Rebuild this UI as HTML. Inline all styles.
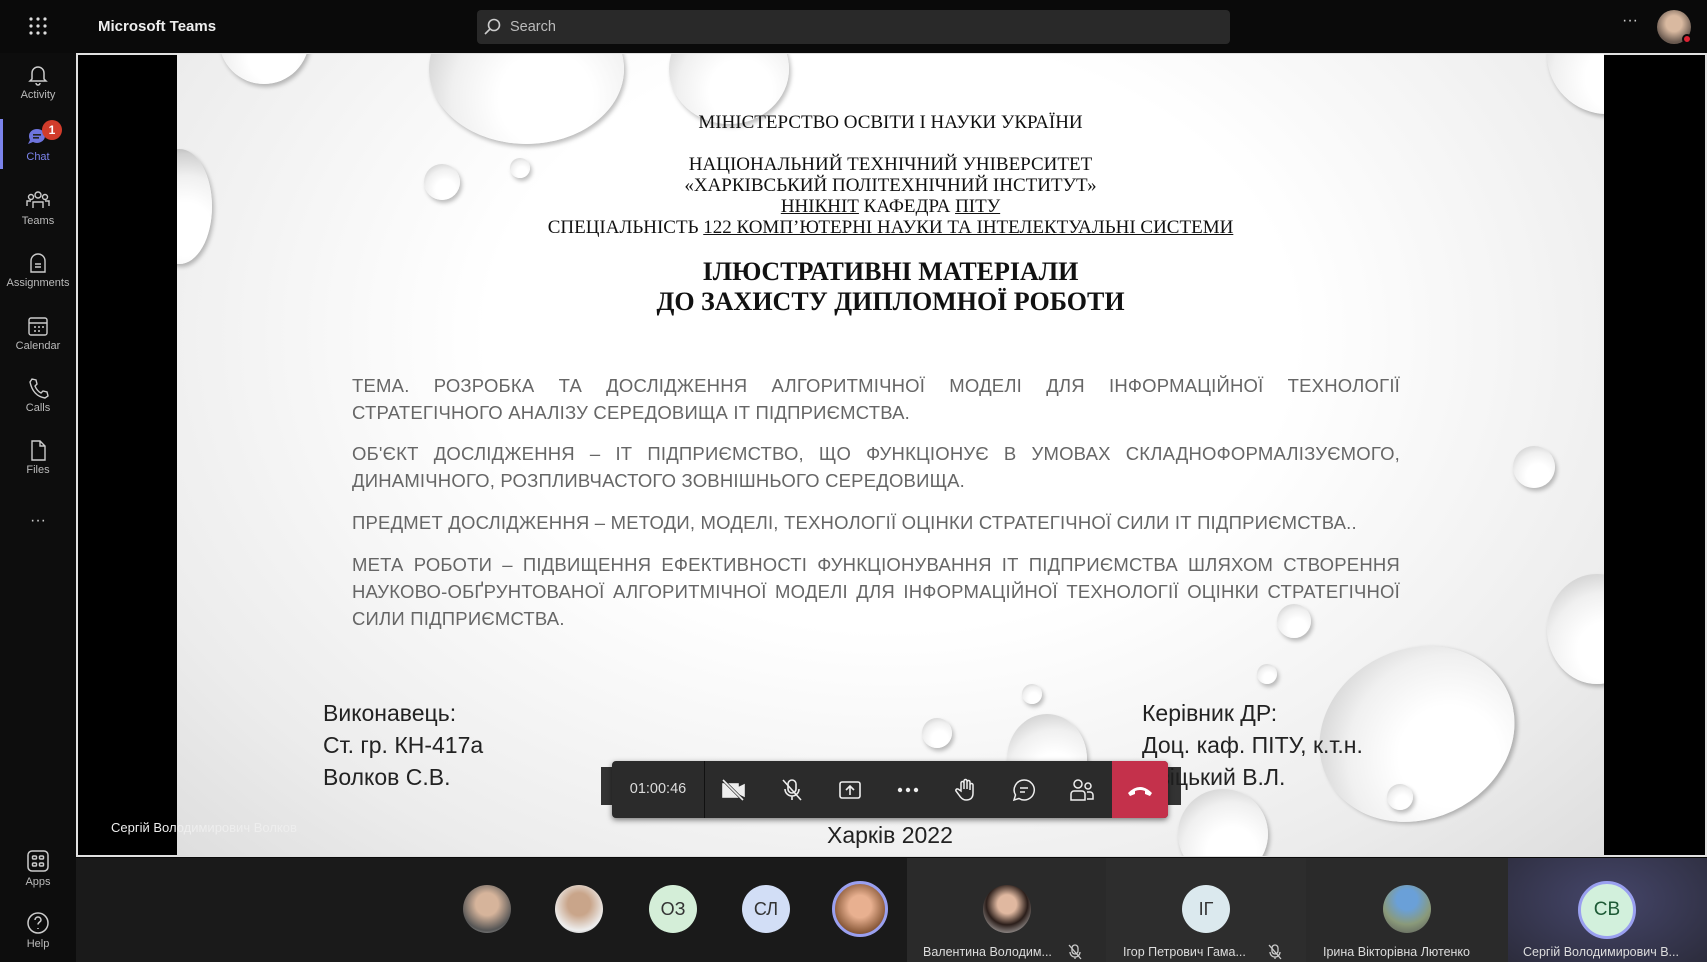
<!DOCTYPE html>
<html><head><meta charset="utf-8"><style>
*{margin:0;padding:0;box-sizing:border-box}
body{width:1707px;height:962px;background:#0b0b0b;position:relative;overflow:hidden;font-family:"Liberation Sans",sans-serif;color:#fff}
.a{position:absolute}
.top{left:0;top:0;width:1707px;height:53px;background:#0a0a0a}
.side{left:0;top:53px;width:76px;height:909px;background:#0d0d0d}
.si{position:absolute;left:0;width:76px;text-align:center;font-size:11px;color:#bbb;z-index:5}
.si svg{display:block;margin:0 auto 3px}
.slide{left:177px;top:54px;width:1427px;height:802px;background:radial-gradient(ellipse at 50% 35%,#fff 40%,#ececec 80%,#dedede 100%);overflow:hidden;color:#111}
.ser{font-family:"Liberation Serif",serif}
.c{position:absolute;left:0;width:1427px;text-align:center}
.p{position:absolute;left:175px;width:1048px;font-size:18.5px;color:#666;line-height:27px;text-align:justify;text-align-last:left;letter-spacing:.2px}
.drop{position:absolute;border-radius:50%;background:radial-gradient(circle at 60% 70%,#fff 30%,#f0f0f0 60%,#d0d0d0 85%,#aaa 100%);box-shadow:2px 3px 4px rgba(0,0,0,.25)}
.big{font-size:23px;color:#222;line-height:32px}
.bar{left:612px;top:761px;width:556px;height:57px;background:#2b2b2b;border-radius:4px;box-shadow:0 2px 6px rgba(0,0,0,.5)}
.ic{position:absolute;top:0;height:57px;width:58px;display:flex;align-items:center;justify-content:center}
.av{position:absolute;width:48px;height:48px;border-radius:50%;display:flex;align-items:center;justify-content:center;font-size:18px;color:#333;top:885px}
.nm{position:absolute;top:945px;font-size:12.5px;color:#ddd;white-space:nowrap}
</style></head><body>
<div class="a top">
 <svg class="a" style="left:28px;top:16px" width="20" height="20" fill="#ddd"><circle cx="3" cy="3" r="1.6"/><circle cx="10" cy="3" r="1.6"/><circle cx="17" cy="3" r="1.6"/><circle cx="3" cy="10" r="1.6"/><circle cx="10" cy="10" r="1.6"/><circle cx="17" cy="10" r="1.6"/><circle cx="3" cy="17" r="1.6"/><circle cx="10" cy="17" r="1.6"/><circle cx="17" cy="17" r="1.6"/></svg>
 <div class="a" style="left:98px;top:18px;font-size:15px;font-weight:bold;color:#eee">Microsoft Teams</div>
 <div class="a" style="left:477px;top:10px;width:753px;height:34px;background:#292929;border-radius:4px"></div>
 <svg class="a" style="left:484px;top:18px" width="18" height="18" fill="none" stroke="#ccc" stroke-width="1.6"><circle cx="10" cy="7" r="5.5"/><path d="M6 11L1 16"/></svg>
 <div class="a" style="left:510px;top:19px;font-size:14.5px;color:#bbb">Search</div>
 <div class="a" style="left:1622px;top:12px;font-size:16px;color:#ccc">···</div>
 <div class="a" style="left:1657px;top:10px;width:34px;height:34px;border-radius:50%;background:radial-gradient(circle at 50% 40%,#d9b9a0 30%,#6a5a50 70%)"></div>
 <div class="a" style="left:1682px;top:34px;width:10px;height:10px;border-radius:50%;background:#d23;border:2px solid #0a0a0a"></div>
</div>
<div class="a side">
 <div class="a" style="left:0;top:66px;width:3px;height:50px;background:#7b83eb"></div>
</div>
<div class="si" style="top:64px"><svg width="22" height="22" fill="none" stroke="#ccc" stroke-width="1.5"><path d="M5 15V9a6 6 0 0112 0v6l2 2H3z M9 19a2 2 0 004 0"/></svg>Activity</div>
<div class="si" style="top:126px;color:#7b83eb"><svg width="24" height="22"><path d="M3 10a8 7 0 1116 0a8 7 0 01-12 6l-5 2 2-4a7 7 0 01-1-4z" fill="#6e74dd"/><rect x="7" y="8" width="8" height="1.6" fill="#222"/><rect x="7" y="11" width="6" height="1.6" fill="#222"/></svg>Chat</div>
<div class="a" style="left:42px;top:120px;width:20px;height:20px;border-radius:50%;background:#d13c2b;font-size:12px;font-weight:bold;text-align:center;line-height:20px;z-index:6">1</div>
<div class="si" style="top:190px"><svg width="24" height="22" fill="none" stroke="#ccc" stroke-width="1.4"><circle cx="12" cy="5" r="3"/><circle cx="5" cy="7" r="2.5"/><circle cx="19" cy="7" r="2.5"/><path d="M7 18v-6h10v6M1 16v-5h4M23 16v-5h-4"/></svg>Teams</div>
<div class="si" style="top:252px"><svg width="22" height="22" fill="none" stroke="#ccc" stroke-width="1.4"><path d="M4 20V9a7 7 0 0114 0v11z M8 12h6M8 15h6"/></svg>Assignments</div>
<div class="si" style="top:315px"><svg width="22" height="22" fill="none" stroke="#ccc" stroke-width="1.4"><rect x="2" y="3" width="18" height="17" rx="2"/><path d="M2 8h18M7 12h2M11 12h2M15 12h2M7 16h2M11 16h2"/></svg>Calendar</div>
<div class="si" style="top:377px"><svg width="22" height="22" fill="none" stroke="#ccc" stroke-width="1.4"><path d="M5 2l4 1 1 4-2 2q2 5 6 7l2-2 4 1 1 4-3 2Q6 19 3 5z"/></svg>Calls</div>
<div class="si" style="top:439px"><svg width="22" height="22" fill="none" stroke="#ccc" stroke-width="1.4"><path d="M5 2h8l5 5v14H5z M13 2v5h5"/></svg>Files</div>
<div class="si" style="top:512px;font-size:16px;color:#ccc">···</div>
<div class="si" style="top:849px"><svg width="24" height="24" fill="none" stroke="#ccc" stroke-width="1.5"><rect x="2" y="2" width="20" height="20" rx="4"/><rect x="6.5" y="7" width="4" height="3" rx="1"/><rect x="13.5" y="7" width="4" height="3" rx="1"/><rect x="6.5" y="14" width="4" height="3" rx="1"/><rect x="13.5" y="14" width="4" height="3" rx="1"/></svg>Apps</div>
<div class="si" style="top:911px"><svg width="24" height="24" fill="none" stroke="#ccc" stroke-width="1.5"><circle cx="12" cy="12" r="10"/><path d="M9 9a3 3 0 116 0c0 2-3 2-3 4.5M12 17v1"/></svg>Help</div>

<div class="a" style="left:76px;top:53px;width:1631px;height:804px;background:#000;border:2px solid #e0e0e0"></div>
<div class="a slide">
 <div class="drop" style="left:42px;top:-60px;width:90px;height:90px"></div>
 <div class="drop" style="left:252px;top:-60px;width:195px;height:150px"></div>
 <div class="drop" style="left:492px;top:-40px;width:120px;height:110px"></div>
 <div class="drop" style="left:-30px;top:95px;width:65px;height:115px"></div>
 <div class="drop" style="left:247px;top:110px;width:36px;height:36px"></div>
 <div class="drop" style="left:333px;top:104px;width:20px;height:20px"></div>
 <div class="drop" style="left:1370px;top:-60px;width:120px;height:120px"></div>
 <div class="drop" style="left:1336px;top:392px;width:42px;height:42px"></div>
 <div class="drop" style="left:1370px;top:520px;width:100px;height:110px"></div>
 <div class="drop" style="left:1140px;top:595px;width:200px;height:170px;transform:rotate(-25deg)"></div>
 <div class="drop" style="left:1100px;top:550px;width:34px;height:34px"></div>
 <div class="drop" style="left:1080px;top:610px;width:20px;height:20px"></div>
 <div class="drop" style="left:845px;top:630px;width:20px;height:20px"></div>
 <div class="drop" style="left:745px;top:664px;width:30px;height:30px"></div>
 <div class="drop" style="left:830px;top:660px;width:80px;height:90px"></div>
 <div class="drop" style="left:1001px;top:735px;width:90px;height:90px"></div>
 <div class="drop" style="left:1210px;top:730px;width:26px;height:26px"></div>

 <div class="c ser" style="top:58px;font-size:19px">МІНІСТЕРСТВО ОСВІТИ І НАУКИ УКРАЇНИ</div>
 <div class="c ser" style="top:100px;font-size:19px;line-height:21px">НАЦІОНАЛЬНИЙ ТЕХНІЧНИЙ УНІВЕРСИТЕТ<br>«ХАРКІВСЬКИЙ ПОЛІТЕХНІЧНИЙ ІНСТИТУТ»<br><u>ННІКНІТ</u> КАФЕДРА <u>ПІТУ</u><br>СПЕЦІАЛЬНІСТЬ <u>122 КОМП’ЮТЕРНІ НАУКИ ТА ІНТЕЛЕКТУАЛЬНІ СИСТЕМИ</u></div>
 <div class="c ser" style="top:203px;font-size:26px;font-weight:bold;line-height:30px">ІЛЮСТРАТИВНІ МАТЕРІАЛИ<br>ДО ЗАХИСТУ ДИПЛОМНОЇ РОБОТИ</div>
 <div class="p" style="top:318px">ТЕМА. РОЗРОБКА ТА ДОСЛІДЖЕННЯ АЛГОРИТМІЧНОЇ МОДЕЛІ ДЛЯ ІНФОРМАЦІЙНОЇ ТЕХНОЛОГІЇ СТРАТЕГІЧНОГО АНАЛІЗУ СЕРЕДОВИЩА ІТ ПІДПРИЄМСТВА.</div>
 <div class="p" style="top:386px">ОБ'ЄКТ ДОСЛІДЖЕННЯ – ІТ ПІДПРИЄМСТВО, ЩО ФУНКЦІОНУЄ В УМОВАХ СКЛАДНОФОРМАЛІЗУЄМОГО, ДИНАМІЧНОГО, РОЗПЛИВЧАСТОГО ЗОВНІШНЬОГО СЕРЕДОВИЩА.</div>
 <div class="p" style="top:455px">ПРЕДМЕТ ДОСЛІДЖЕННЯ – МЕТОДИ, МОДЕЛІ, ТЕХНОЛОГІЇ ОЦІНКИ СТРАТЕГІЧНОЇ СИЛИ ІТ ПІДПРИЄМСТВА..</div>
 <div class="p" style="top:497px">МЕТА РОБОТИ – ПІДВИЩЕННЯ ЕФЕКТИВНОСТІ ФУНКЦІОНУВАННЯ ІТ ПІДПРИЄМСТВА ШЛЯХОМ СТВОРЕННЯ НАУКОВО-ОБҐРУНТОВАНОЇ АЛГОРИТМІЧНОЇ МОДЕЛІ ДЛЯ ІНФОРМАЦІЙНОЇ ТЕХНОЛОГІЇ ОЦІНКИ СТРАТЕГІЧНОЇ СИЛИ ПІДПРИЄМСТВА.</div>
 <div class="a big" style="left:146px;top:643px">Виконавець:<br>Ст. гр. КН-417а<br>Волков С.В.</div>
 <div class="a big" style="left:965px;top:643px">Керівник ДР:<br>Доц. каф. ПІТУ, к.т.н.<br>Двіцький В.Л.</div>
 <div class="a" style="left:650px;top:768px;font-size:23px;color:#222">Харків 2022</div>
</div>
<div class="a" style="left:111px;top:820px;font-size:13px;color:#eee">Сергій Володимирович Волков</div>

<div class="a" style="left:601px;top:767px;width:580px;height:38px;background:#1e1e1e;opacity:.9"></div>
<div class="a bar">
 <div class="a" style="left:0;top:0;width:93px;height:57px;border-right:1px solid #111;font-size:14.5px;color:#ddd;text-align:center;line-height:57px">01:00:46</div>
 <div class="ic" style="left:93px"><svg width="26" height="22" fill="none" stroke="#eee" stroke-width="1.6"><rect x="2" y="5" width="15" height="13" fill="#eee"/><path d="M17 9l6-3v11l-6-3" fill="#eee"/><path d="M2 1l20 20" stroke="#2b2b2b" stroke-width="3"/><path d="M2 1l20 20"/></svg></div>
 <div class="ic" style="left:151px"><svg width="22" height="24" fill="none" stroke="#eee" stroke-width="1.6"><rect x="7" y="2" width="8" height="13" rx="4"/><path d="M4 11a7 7 0 0014 0M11 18v4M2 2l18 20"/></svg></div>
 <div class="ic" style="left:209px"><svg width="24" height="22" fill="none" stroke="#eee" stroke-width="1.6"><rect x="2" y="3" width="20" height="16" rx="2"/><path d="M12 16V7M8 11l4-4 4 4"/></svg></div>
 <div class="ic" style="left:267px"><svg width="22" height="6" fill="#eee"><circle cx="3" cy="3" r="2.2"/><circle cx="11" cy="3" r="2.2"/><circle cx="19" cy="3" r="2.2"/></svg></div>
 <div class="ic" style="left:325px"><svg width="22" height="24" fill="none" stroke="#eee" stroke-width="1.5"><path d="M6 13V5a1.5 1.5 0 013 0v6V3a1.5 1.5 0 013 0v8V4a1.5 1.5 0 013 0v8V7a1.5 1.5 0 013 0v8q0 7-7 7-4 0-7-5l-3-4a1.5 1.5 0 012-2z"/></svg></div>
 <div class="ic" style="left:383px"><svg width="24" height="24" fill="none" stroke="#eee" stroke-width="1.5"><path d="M12 2a10 10 0 11-5 18.5L2 22l1.5-5A10 10 0 0112 2zM8 10h8M8 14h5"/></svg></div>
 <div class="ic" style="left:441px"><svg width="26" height="24" fill="none" stroke="#eee" stroke-width="1.5"><circle cx="9" cy="6" r="4"/><circle cx="19" cy="8" r="3"/><path d="M2 22v-6a3 3 0 013-3h8a3 3 0 013 3v6zM18 14h3a3 3 0 013 3v4h-6"/></svg></div>
 <div class="a" style="left:500px;top:0;width:56px;height:57px;background:#c4314b;border-radius:0 4px 4px 0;display:flex;align-items:center;justify-content:center"><svg width="26" height="12"><path d="M1 9q12-12 24 0l-2 3-5-2v-3q-5-2-10 0v3l-5 2z" fill="#fff"/></svg></div>
</div>

<div class="a" style="left:76px;top:858px;width:1631px;height:104px;background:#1a1a1a"></div>
<div class="a" style="left:907px;top:858px;width:199px;height:104px;background:#2a2a2a"></div>
<div class="a" style="left:1106px;top:858px;width:200px;height:104px;background:#2d2d2d"></div>
<div class="a" style="left:1306px;top:858px;width:202px;height:104px;background:#2a2a2a"></div>
<div class="a" style="left:1508px;top:858px;width:199px;height:104px;background:radial-gradient(ellipse at 50% 40%,#45466a,#2c2c3c)"></div>

<div class="av" style="left:463px;background:radial-gradient(circle at 50% 40%,#d6b49b 30%,#555 70%,#ccc)"></div>
<div class="av" style="left:555px;background:radial-gradient(circle at 50% 40%,#c9a58a 30%,#eee 70%,#888)"></div>
<div class="av" style="left:649px;background:#d4eed8">ОЗ</div>
<div class="av" style="left:742px;background:#d2def6">СЛ</div>
<div class="av" style="left:832px;top:881px;width:56px;height:56px;border:3px solid #9aa0f0;background:radial-gradient(circle at 50% 45%,#e8b090 30%,#8a5a3a 70%,#333)"></div>
<div class="av" style="left:983px;background:radial-gradient(circle at 50% 40%,#e0b8a0 25%,#2b1e1a 55%,#eee)"></div>
<div class="av" style="left:1182px;background:#dbe9ee">ІГ</div>
<div class="av" style="left:1383px;background:radial-gradient(circle at 50% 30%,#6aa0d8 25%,#8a9a7a 60%,#555)"></div>
<div class="av" style="left:1578px;top:881px;width:58px;height:58px;border:3px solid #9aa0f0;background:#d2f0dc;color:#1e5a36;font-size:19px">СВ</div>
<div class="nm" style="left:923px">Валентина Володим...</div>
<div class="nm" style="left:1123px">Ігор Петрович Гама...</div>
<div class="nm" style="left:1323px">Ірина Вікторівна Лютенко</div>
<div class="nm" style="left:1523px">Сергій Володимирович В...</div>
<svg class="a" style="left:1068px;top:944px" width="14" height="16" fill="none" stroke="#ccc" stroke-width="1.3"><rect x="4" y="1" width="6" height="9" rx="3"/><path d="M2 8a5 5 0 0010 0M7 13v2M1 1l12 14"/></svg>
<svg class="a" style="left:1268px;top:944px" width="14" height="16" fill="none" stroke="#ccc" stroke-width="1.3"><rect x="4" y="1" width="6" height="9" rx="3"/><path d="M2 8a5 5 0 0010 0M7 13v2M1 1l12 14"/></svg>
</body></html>
